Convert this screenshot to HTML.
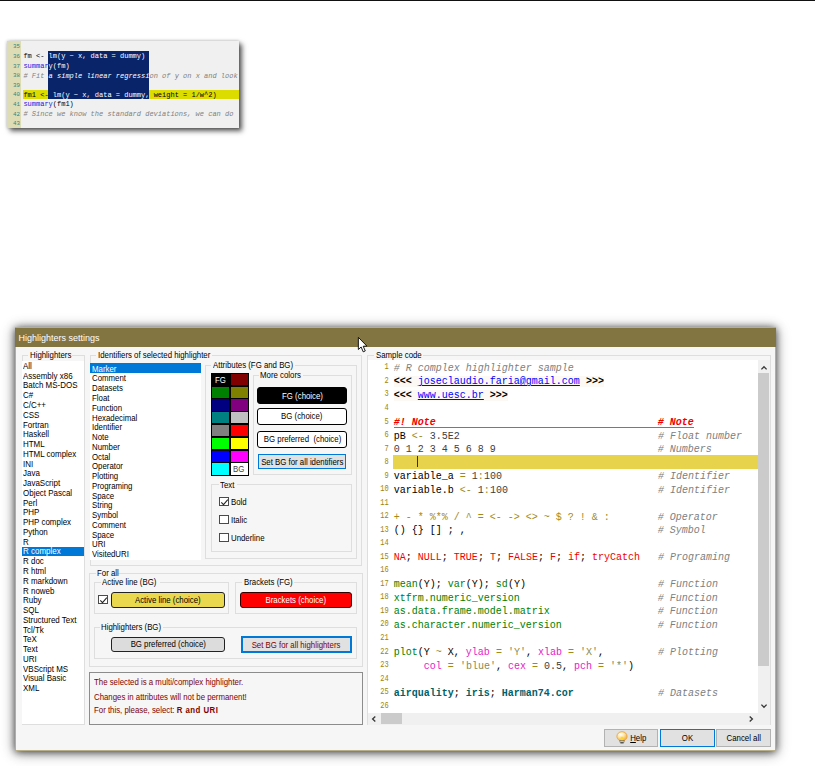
<!DOCTYPE html>
<html><head><meta charset="utf-8"><title>Highlighters settings</title>
<style>
html,body{margin:0;padding:0;background:#fff;}
body{width:815px;height:766px;position:relative;overflow:hidden;font-family:"Liberation Sans",sans-serif;font-size:9px;color:#000;}
.b{position:absolute;box-sizing:border-box;}
.t{position:absolute;white-space:nowrap;transform-origin:0 50%;line-height:10px;height:10px;font-size:9px;}
.g{border:1px solid #dedede;}
.list{position:absolute;transform-origin:0 0;white-space:nowrap;font-size:9px;}
.list div{height:9.78px;line-height:9.78px;}
.btn{position:absolute;box-sizing:border-box;display:flex;justify-content:center;align-items:center;white-space:nowrap;font-size:9px;overflow:hidden;}
.btn span{display:block;flex:none;transform:scaleX(.87);transform-origin:50% 50%;line-height:10px;}
.code{position:absolute;font-family:"Liberation Mono",monospace;font-size:10px;white-space:pre;}
.code div{height:13.54px;line-height:13.54px;}
.ln{position:absolute;font-family:"Liberation Mono",monospace;font-size:8.4px;text-align:right;color:#9c8408;transform:scaleX(.84);transform-origin:100% 0;}
.ln div{height:13.54px;line-height:15.6px;}
.c{color:#808080;font-style:italic;}
.o{color:#a08a20;}
.n{color:#404040;}
.p{color:#f00000;}
.f{color:#008000;}
.m{color:#e818c8;}
.s{color:#8a8a50;}
.d{color:#00606a;font-weight:bold;}
.u{color:#0000ff;text-decoration:underline;}
.nt{color:#f00000;font-weight:bold;font-style:italic;}
.k{font-weight:bold;}
.mini{position:absolute;font-family:"Liberation Mono",monospace;font-size:7px;white-space:pre;}
.mini div{height:9.62px;line-height:9.62px;}
</style></head><body>

<div class="b " style="left:0.0px;top:0.0px;width:815.0px;height:1.3px;background:#111"></div>
<div class="b " style="left:6.7px;top:41.3px;width:232.3px;height:86.9px;background:#f0f0f0;box-shadow:3px 3px 5px rgba(0,0,0,.65),0 0 3px rgba(0,0,0,.25)"></div>
<div class="b " style="left:6.7px;top:41.3px;width:14.3px;height:86.9px;background:#dddcb4"></div>
<div class="b " style="left:23.0px;top:89.5px;width:216.0px;height:9.3px;background:#dcdc00"></div>
<div class="b " style="left:47.8px;top:51.0px;width:101.7px;height:47.8px;background:#0a246a"></div>
<div class="mini" style="left:6px;top:42.4px;width:13.9px;text-align:right;color:#2f8585;font-size:5.8px"><div>35</div><div>36</div><div>37</div><div>38</div><div>39</div><div>40</div><div>41</div><div>42</div><div>43</div></div>
<div class="mini" style="left:23.4px;top:42.7px;width:215px;overflow:hidden"><div>&nbsp;</div><div>fm &lt;- <span style="color:#fff">lm(y ~ x, data = dummy)</span></div><div><span style="color:#2020e0">summar</span><span style="color:#fff">y(fm)</span></div><div><span class="c"># Fit </span><span style="color:#fff"><i>a simple linear regressi</i></span><span class="c">on of y on x and look</span></div><div>&nbsp;</div><div>fm1 &lt;-<span style="color:#fff"> lm(y ~ x, data = dummy,</span> weight = 1/w^2)</div><div><span style="color:#2020e0">summary</span>(fm1)</div><div><span class="c"># Since we know the standard deviations, we can do </span></div><div>&nbsp;</div></div>
<div class="b " style="left:15.0px;top:327.2px;width:761.2px;height:423.4px;background:#f6f6f6;border:1px solid #b9ae8a;box-shadow:0 1px 8px rgba(0,0,0,.7),0 2px 14px rgba(0,0,0,.3)"></div>
<div class="b " style="left:15.3px;top:327.5px;width:760.6px;height:19.4px;background:#837541"></div>
<span class="t " style="left:18.4px;top:332.7px;transform:scaleX(1);color:#fff">Highlighters settings</span>
<svg class="b" style="left:356.6px;top:335.9px" width="12.6" height="19.8" viewBox="0 0 14 22"><path d="M1.5 1.5 L1.5 15 L4.6 12.2 L6.9 17.6 L9.2 16.6 L6.9 11.4 L11 11.2 Z" fill="#fff" stroke="#000" stroke-width="1" stroke-linejoin="miter"/></svg>
<div class="b g" style="left:22.0px;top:354.8px;width:62.5px;height:370.2px;"></div>
<div class="b " style="left:28.0px;top:349.8px;width:43.7px;height:10.0px;background:#f6f6f6"></div>
<span class="t " style="left:29.5px;top:350.2px;transform:scaleX(0.87);">Highlighters</span>
<div class="b " style="left:21.7px;top:360.5px;width:62.4px;height:363.8px;background:#fff"></div>
<div class="b " style="left:21.7px;top:546.5px;width:62.4px;height:9.8px;background:#0078d7"></div>
<div class="list" style="left:23.4px;top:361.91px;transform:scaleX(.885)"><div>All</div><div>Assembly x86</div><div>Batch MS-DOS</div><div>C#</div><div>C/C++</div><div>CSS</div><div>Fortran</div><div>Haskell</div><div>HTML</div><div>HTML complex</div><div>INI</div><div>Java</div><div>JavaScript</div><div>Object Pascal</div><div>Perl</div><div>PHP</div><div>PHP complex</div><div>Python</div><div>R</div><div style=color:#fff>R complex</div><div>R doc</div><div>R html</div><div>R markdown</div><div>R noweb</div><div>Ruby</div><div>SQL</div><div>Structured Text</div><div>Tcl/Tk</div><div>TeX</div><div>Text</div><div>URI</div><div>VBScript MS</div><div>Visual Basic</div><div>XML</div></div>
<div class="b g" style="left:89.6px;top:354.8px;width:272.9px;height:211.6px;"></div>
<div class="b " style="left:96.4px;top:349.8px;width:115.4px;height:10.0px;background:#f6f6f6"></div>
<span class="t " style="left:97.9px;top:350.2px;transform:scaleX(0.87);">Identifiers of selected highlighter</span>
<div class="b " style="left:90.0px;top:363.4px;width:111.3px;height:196.6px;background:#fff"></div>
<div class="b " style="left:90.0px;top:363.4px;width:111.3px;height:9.8px;background:#0078d7"></div>
<div class="list" style="left:91.5px;top:364.71px;transform:scaleX(0.87)"><div style=color:#fff>Marker</div><div>Comment</div><div>Datasets</div><div>Float</div><div>Function</div><div>Hexadecimal</div><div>Identifier</div><div>Note</div><div>Number</div><div>Octal</div><div>Operator</div><div>Plotting</div><div>Programing</div><div>Space</div><div>String</div><div>Symbol</div><div>Comment</div><div>Space</div><div>URI</div><div>VisitedURI</div></div>
<div class="b g" style="left:205.2px;top:365.3px;width:152.1px;height:194.0px;"></div>
<div class="b " style="left:211.4px;top:360.3px;width:83.4px;height:10.0px;background:#f6f6f6"></div>
<span class="t " style="left:212.9px;top:359.9px;transform:scaleX(0.87);">Attributes (FG and BG)</span>
<div class="b " style="left:210.9px;top:373.0px;width:37.9px;height:102.5px;background:#000"></div>
<div class="b " style="left:211.8px;top:373.8px;width:17.3px;height:11.2px;background:#000"></div>
<div class="b " style="left:230.8px;top:373.8px;width:17.3px;height:11.2px;background:#800000"></div>
<div class="b " style="left:211.8px;top:386.6px;width:17.3px;height:11.2px;background:#008000"></div>
<div class="b " style="left:230.8px;top:386.6px;width:17.3px;height:11.2px;background:#808000"></div>
<div class="b " style="left:211.8px;top:399.4px;width:17.3px;height:11.2px;background:#000080"></div>
<div class="b " style="left:230.8px;top:399.4px;width:17.3px;height:11.2px;background:#800080"></div>
<div class="b " style="left:211.8px;top:412.2px;width:17.3px;height:11.2px;background:#008080"></div>
<div class="b " style="left:230.8px;top:412.2px;width:17.3px;height:11.2px;background:#c0c0c0"></div>
<div class="b " style="left:211.8px;top:425.0px;width:17.3px;height:11.2px;background:#808080"></div>
<div class="b " style="left:230.8px;top:425.0px;width:17.3px;height:11.2px;background:#ff0000"></div>
<div class="b " style="left:211.8px;top:437.8px;width:17.3px;height:11.2px;background:#00ff00"></div>
<div class="b " style="left:230.8px;top:437.8px;width:17.3px;height:11.2px;background:#ffff00"></div>
<div class="b " style="left:211.8px;top:450.6px;width:17.3px;height:11.2px;background:#0000ff"></div>
<div class="b " style="left:230.8px;top:450.6px;width:17.3px;height:11.2px;background:#ff00ff"></div>
<div class="b " style="left:211.8px;top:463.4px;width:17.3px;height:11.2px;background:#00ffff"></div>
<div class="b " style="left:230.8px;top:463.4px;width:17.3px;height:11.2px;background:#fff"></div>
<span class="t " style="left:214.7px;top:375.1px;transform:scaleX(0.87);color:#fff">FG</span>
<span class="t " style="left:233.4px;top:464.4px;transform:scaleX(0.87);color:#404040">BG</span>
<div class="b g" style="left:253.1px;top:375.0px;width:99.1px;height:100.2px;"></div>
<div class="b " style="left:258.8px;top:370.0px;width:44.7px;height:10.0px;background:#f6f6f6"></div>
<span class="t " style="left:260.3px;top:370.4px;transform:scaleX(0.87);">More colors</span>
<div class="btn" style="left:256.8px;top:387.4px;width:90.5px;height:16.3px;line-height:14.3px;background:#000;color:#fff;border:1px solid #000;border-radius:3px"><span>FG (choice)</span></div>
<div class="btn" style="left:256.8px;top:408.3px;width:90.5px;height:16.4px;line-height:14.4px;background:#fff;border:1px solid #000;border-radius:3px"><span>BG (choice)</span></div>
<div class="btn" style="left:256.8px;top:431.3px;width:90.5px;height:16.4px;line-height:14.4px;background:#fff;border:1px solid #000;border-radius:3px"><span>BG preferred &nbsp;(choice)</span></div>
<div class="btn" style="left:258.0px;top:454.3px;width:87.9px;height:14.5px;line-height:12.5px;background:#e1e1e1;border:1px solid #0078d7"><span>Set BG for all identifiers</span></div>
<div class="b g" style="left:211.0px;top:484.3px;width:140.6px;height:68.2px;"></div>
<div class="b " style="left:218.5px;top:479.3px;width:18.0px;height:10.0px;background:#f6f6f6"></div>
<span class="t " style="left:220.0px;top:480.4px;transform:scaleX(0.87);">Text</span>
<div class="b " style="left:219.3px;top:497.0px;width:9.3px;height:9.3px;background:#fff;border:1px solid #4a4a4a"><svg width="9" height="9" viewBox="0 0 9 9" style="position:absolute;left:-0.5px;top:-0.5px"><path d="M1.3 4.3 L3.5 6.6 L7.8 1.7" fill="none" stroke="#222" stroke-width="1.05"/></svg></div>
<span class="t " style="left:231.0px;top:496.9px;transform:scaleX(0.87);">Bold</span>
<div class="b " style="left:219.3px;top:514.8px;width:9.3px;height:9.3px;background:#fff;border:1px solid #4a4a4a"></div>
<span class="t " style="left:231.0px;top:514.7px;transform:scaleX(0.87);">Italic</span>
<div class="b " style="left:219.3px;top:532.9px;width:9.3px;height:9.3px;background:#fff;border:1px solid #4a4a4a"></div>
<span class="t " style="left:231.0px;top:532.8px;transform:scaleX(0.87);">Underline</span>
<div class="b g" style="left:89.2px;top:572.6px;width:273.5px;height:94.4px;"></div>
<div class="b " style="left:95.8px;top:567.6px;width:22.5px;height:10.0px;background:#f6f6f6"></div>
<span class="t " style="left:97.3px;top:568.0px;transform:scaleX(0.87);">For all</span>
<div class="b g" style="left:94.0px;top:581.9px;width:135.0px;height:32.5px;"></div>
<div class="b " style="left:100.5px;top:576.9px;width:59.0px;height:10.0px;background:#f6f6f6"></div>
<span class="t " style="left:102.0px;top:577.3px;transform:scaleX(0.87);">Active line (BG)</span>
<div class="b " style="left:98.4px;top:595.2px;width:9.3px;height:9.3px;background:#fff;border:1px solid #4a4a4a"><svg width="9" height="9" viewBox="0 0 9 9" style="position:absolute;left:-0.5px;top:-0.5px"><path d="M1.3 4.3 L3.5 6.6 L7.8 1.7" fill="none" stroke="#222" stroke-width="1.05"/></svg></div>
<div class="btn" style="left:111.3px;top:592.3px;width:113.3px;height:15.9px;line-height:13.9px;background:#ead84e;border:1px solid #222;border-radius:3px"><span>Active line (choice)</span></div>
<div class="b g" style="left:235.3px;top:581.9px;width:121.5px;height:32.5px;"></div>
<div class="b " style="left:242.3px;top:576.9px;width:51.9px;height:10.0px;background:#f6f6f6"></div>
<span class="t " style="left:243.8px;top:577.3px;transform:scaleX(0.87);">Brackets (FG)</span>
<div class="btn" style="left:240.1px;top:592.3px;width:112.3px;height:15.9px;line-height:13.9px;background:#ff0000;color:#fff;border:1px solid #300;border-radius:3px"><span>Brackets (choice)</span></div>
<div class="b g" style="left:94.0px;top:626.6px;width:262.8px;height:32.4px;"></div>
<div class="b " style="left:99.8px;top:621.6px;width:63.4px;height:10.0px;background:#f6f6f6"></div>
<span class="t " style="left:101.3px;top:622.0px;transform:scaleX(0.87);">Highlighters (BG)</span>
<div class="btn" style="left:111.3px;top:636.5px;width:113.3px;height:15.8px;line-height:13.8px;background:#dcdcdc;border:1px solid #222;border-radius:3px"><span>BG preferred (choice)</span></div>
<div class="btn" style="left:241.2px;top:636.4px;width:110.4px;height:16.4px;line-height:14.4px;background:#e1e1e1;border:2px solid #0078d7;color:#800000"><span>Set BG for all highlighters</span></div>
<div class="b " style="left:89.2px;top:672.2px;width:273.5px;height:52.7px;background:#f6f6f6;border:1px solid #8c8c8c"></div>
<span class="t " style="left:94.0px;top:677.1px;transform:scaleX(0.87);color:#800000">The selected is a multi/complex highlighter.</span>
<span class="t " style="left:94.0px;top:691.6px;transform:scaleX(0.87);color:#800000">Changes in attributes will not be permanent!</span>
<span class="t " style="left:94.0px;top:705.3px;transform:scaleX(0.87);color:#800000">For this, please, select: <b style="letter-spacing:.55px">R and URI</b></span>
<div class="b g" style="left:367.2px;top:354.6px;width:403.9px;height:370.7px;"></div>
<div class="b " style="left:374.3px;top:349.6px;width:49.2px;height:10.0px;background:#f6f6f6"></div>
<span class="t " style="left:375.8px;top:350.0px;transform:scaleX(0.87);">Sample code</span>
<div class="b " style="left:368.0px;top:360.3px;width:389.6px;height:352.3px;background:#fff"></div>
<div class="b " style="left:393.2px;top:455.2px;width:364.4px;height:13.5px;background:#e8d44c"></div>
<div class="b " style="left:417.1px;top:455.5px;width:1.3px;height:11.4px;background:#1a2a8a"></div>
<div class="b " style="left:393.5px;top:426.8px;width:300.1px;height:1.0px;background:#ff4040"></div>
<div class="ln" style="left:376px;top:360.4px;width:12.7px"><div>1</div><div>2</div><div>3</div><div>4</div><div>5</div><div>6</div><div>7</div><div>8</div><div>9</div><div>10</div><div>11</div><div>12</div><div>13</div><div>14</div><div>15</div><div>16</div><div>17</div><div>18</div><div>19</div><div>20</div><div>21</div><div>22</div><div>23</div><div>24</div><div>25</div><div>26</div></div>
<div class="code" style="left:393.8px;top:361.9px"><div><span class="c"># R complex highlighter sample</span></div><div><span style="background:#fcf9f4"><span class="k">&lt;&lt;&lt;</span> <span class="u">joseclaudio.faria@gmail.com</span> <span class="k">&gt;&gt;&gt;</span></span></div><div><span style="background:#fcf9f4"><span class="k">&lt;&lt;&lt;</span> <span class="u">www.uesc.br</span> <span class="k">&gt;&gt;&gt;</span></span></div><div>&nbsp;</div><div><span class="nt">#! Note</span>                                     <span class="nt"># Note</span></div><div>pB <span class="o">&lt;-</span> <span class="n">3.5E2</span>                                 <span class="c"># Float number</span></div><div><span class="n">0 1 2 3 4 5 6 8 9</span>                           <span class="c"># Numbers</span></div><div>&nbsp;</div><div>variable_a <span class="o">=</span> <span class="n">1</span><span class="o">:</span><span class="n">100</span>                          <span class="c"># Identifier</span></div><div>variable.b <span class="o">&lt;-</span> <span class="n">1</span><span class="o">:</span><span class="n">100</span>                         <span class="c"># Identifier</span></div><div>&nbsp;</div><div><span class="o">+ - * %*% / ^ = &lt;- -&gt; &lt;&gt; ~ $ ? ! &amp; :</span>        <span class="c"># Operator</span></div><div>() {} [] ; ,                                <span class="c"># Symbol</span></div><div>&nbsp;</div><div><span class="p">NA</span>; <span class="p">NULL</span>; <span class="p">TRUE</span>; <span class="p">T</span>; <span class="p">FALSE</span>; <span class="p">F</span>; <span class="p">if</span>; <span class="p">tryCatch</span>   <span class="c"># Programing</span></div><div>&nbsp;</div><div><span class="f">mean</span>(Y); <span class="f">var</span>(Y); <span class="f">sd</span>(Y)                      <span class="c"># Function</span></div><div><span class="f">xtfrm.numeric_version</span>                       <span class="c"># Function</span></div><div><span class="f">as.data.frame.model.matrix</span>                  <span class="c"># Function</span></div><div><span class="f">as.character.numeric_version</span>                <span class="c"># Function</span></div><div>&nbsp;</div><div><span class="f">plot</span>(Y <span class="o">~</span> X, <span class="m">ylab</span> <span class="o">=</span> <span class="s">'Y'</span>, <span class="m">xlab</span> <span class="o">=</span> <span class="s">'X'</span>,         <span class="c"># Plotting</span></div><div>     <span class="m">col</span> <span class="o">=</span> <span class="s">'blue'</span>, <span class="m">cex</span> <span class="o">=</span> <span class="n">0.5</span>, <span class="m">pch</span> <span class="o">=</span> <span class="s">'*'</span>)</div><div>&nbsp;</div><div><span class="d">airquality</span>; <span class="d">iris</span>; <span class="d">Harman74.cor</span>              <span class="c"># Datasets</span></div><div>&nbsp;</div></div>
<div class="b " style="left:757.8px;top:360.3px;width:12.5px;height:352.3px;background:#f0f0f0"></div>
<div class="b " style="left:758.1px;top:373.3px;width:11.2px;height:292.5px;background:#cbcbcb"></div>
<div class="b " style="left:368.0px;top:712.6px;width:402.3px;height:12.0px;background:#f0f0f0"></div>
<div class="b " style="left:381.0px;top:713.1px;width:21.0px;height:11.0px;background:#cbcbcb"></div>
<svg class="b" style="left:759.0px;top:362.5px" width="10" height="10" viewBox="-5 -5 10 10"><polyline points="-2.6,1.4 0,-1.3 2.6,1.4" fill="none" stroke="#3a3a3a" stroke-width="1.35"/></svg>
<svg class="b" style="left:759.0px;top:701.0px" width="10" height="10" viewBox="-5 -5 10 10"><polyline points="-2.6,-1.4 0,1.3 2.6,-1.4" fill="none" stroke="#3a3a3a" stroke-width="1.35"/></svg>
<svg class="b" style="left:369.0px;top:713.7px" width="10" height="10" viewBox="-5 -5 10 10"><polyline points="1.3,-2.6 -1.4,0 1.3,2.6" fill="none" stroke="#3a3a3a" stroke-width="1.35"/></svg>
<svg class="b" style="left:746.3px;top:713.7px" width="10" height="10" viewBox="-5 -5 10 10"><polyline points="-1.3,-2.6 1.4,0 -1.3,2.6" fill="none" stroke="#3a3a3a" stroke-width="1.35"/></svg>
<div class="btn" style="left:603.9px;top:729.2px;width:54.5px;height:17.5px;line-height:15.5px;background:#e1e1e1;border:1px solid #b2b2b2;padding-left:15px"><span><u>H</u>elp</span></div>
<svg class="b" style="left:616px;top:731.3px" width="12" height="13" viewBox="0 0 12 13"><defs><radialGradient id="bulb" cx=".38" cy=".3" r=".75"><stop offset="0" stop-color="#ffffff"/><stop offset=".45" stop-color="#fde6a8"/><stop offset="1" stop-color="#f2a535"/></radialGradient></defs><path d="M6 .7 C2.9 .7 .9 2.9 .9 5.4 C.9 7.4 2.3 8.4 3.4 9.6 L8.6 9.6 C9.7 8.4 11.1 7.4 11.1 5.4 C11.1 2.9 9.1 .7 6 .7Z" fill="url(#bulb)" stroke="#eda33a" stroke-width=".9"/><rect x="4.6" y="5.8" width="2.8" height="3.7" fill="#ffd622"/><rect x="3.9" y="9.7" width="4.2" height="1.4" fill="#d8d8d8" stroke="#555" stroke-width=".5"/><rect x="4.4" y="11.3" width="3.2" height="1.1" fill="#333"/></svg>
<div class="btn" style="left:660.3px;top:729.2px;width:54.7px;height:17.5px;line-height:15.5px;background:#e1e1e1;border:1.7px solid #0078d7"><span>OK</span></div>
<div class="btn" style="left:716.2px;top:729.2px;width:54.4px;height:17.5px;line-height:15.5px;background:#e1e1e1;border:1px solid #b2b2b2"><span>Cancel all</span></div>
</body></html>
